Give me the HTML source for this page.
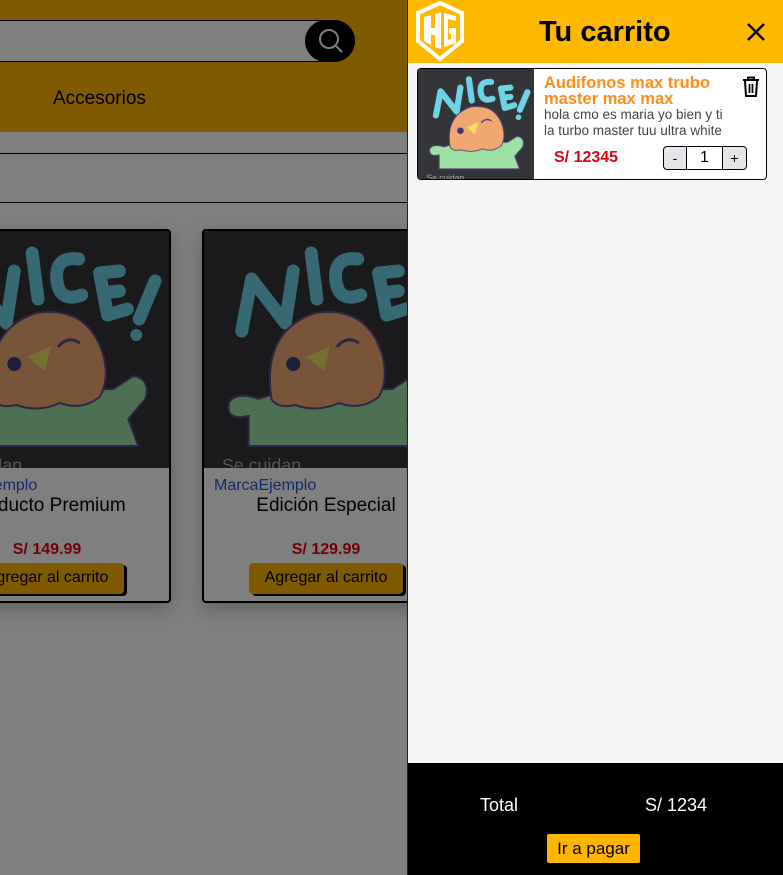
<!DOCTYPE html>
<html><head><meta charset="utf-8"><style>
*{box-sizing:border-box;margin:0;padding:0}
body{width:783px;height:875px;overflow:hidden;position:relative;background:#fff;font-family:"Liberation Sans",sans-serif}
.abs{position:absolute}
.left{left:0;top:0;width:408px;height:875px;overflow:hidden}
.hdr{left:0;top:0;width:408px;height:132px;background:#ffb400}
.search{left:-20px;top:20px;width:375px;height:42px;border:1px solid #000;border-radius:0 21px 21px 0;background:#fff}
.sbtn{left:305px;top:20px;width:50px;height:42px;border-radius:21px;background:#000}
.line{left:0;width:408px;height:1px;background:#000}
.card{top:229px;width:248px;height:374px;border:2px solid #000;border-radius:4px;background:#fff;overflow:hidden;box-shadow:0 6px 20px rgba(0,0,0,.25)}
.card .img{position:absolute;left:0;top:0;width:244px;height:237px;background:#343539}
.brand{position:absolute;left:10px;top:246px;font-size:16px;color:#2c50d8;height:17px;overflow:hidden}
.title{position:absolute;left:0;width:244px;top:264px;text-align:center;font-size:19px;color:#000}
.price{position:absolute;left:0;width:244px;top:310px;text-align:center;font-size:16px;font-weight:bold;color:#e00010}
.btn{position:absolute;left:45px;top:332px;width:154px;height:31px;background:#ffb400;border-radius:4px;box-shadow:3px 2px 0 #000;font-size:16px;text-align:center;line-height:30px;color:#000}
.ov{left:0;top:0;width:408px;height:875px;background:rgba(0,0,0,.5)}
.panel{left:407px;top:0;width:376px;height:875px;background:#f5f5f5;border-left:1px solid #222}
</style></head><body>
<svg width="0" height="0" style="position:absolute"><defs>
<g id="bird">
<rect width="246" height="237" fill="#343539"/>
<g fill="none" stroke="#6fd3e8" stroke-width="13" stroke-linecap="round" stroke-linejoin="round">
<path d="M38 100 L48 48 L82 92 L90 40"/>
<path d="M108 22 L114 68"/>
<path d="M155 28 Q130 25 133 50 Q136 72 158 64"/>
<path d="M196 40 L176 42 L184 84 L204 78 M180 62 L196 60"/>
<path d="M232 50 L216 88"/>
</g>
<circle cx="213" cy="104" r="6" fill="#6fd3e8"/>
<path d="M45 215 L45 185 Q22 190 25 172 Q32 160 55 168 L80 160 L190 158 L210 145 Q228 148 222 168 L205 188 L215 215 Z" fill="#9de0a4" stroke="#5a4a8a" stroke-width="2"/>
<path d="M68 168 Q58 100 112 82 Q165 74 180 125 Q186 150 176 166 Q158 180 136 172 Q114 182 92 174 Q74 178 68 168Z" fill="#f0a870" stroke="#5a4a8a" stroke-width="2"/>
<circle cx="90" cy="133" r="7" fill="#3a3a7a"/>
<path d="M103 126 L127 115 L121 140 Z" fill="#f0e060"/>
<path d="M134 116 Q144 104 156 112" fill="none" stroke="#5a4a8a" stroke-width="3"/>
<text x="18" y="240" font-size="18" fill="#aaa" font-family="Liberation Sans">Se cuidan</text>
</g></defs></svg>

<div class="abs left">
<div class="abs hdr"></div>
<div class="abs search"></div>
<div class="abs sbtn"><svg width="50" height="42"><circle cx="24" cy="19" r="9" fill="none" stroke="#fff" stroke-width="2"/><path d="M31 26 L37 32" stroke="#fff" stroke-width="2"/></svg></div>
<div class="abs" style="left:53px;top:88px;font-size:19px">Accesorios</div>
<div class="abs line" style="top:153px"></div>
<div class="abs line" style="top:202px"></div>

<div class="abs card" style="left:-77px">
<svg class="img" viewBox="0 0 246 237" preserveAspectRatio="none"><use href="#bird"/></svg>
<div class="brand">MarcaEjemplo</div>
<div class="title">Producto Premium</div>
<div class="price">S/ 149.99</div>
<div class="btn">Agregar al carrito</div>
</div>
<div class="abs card" style="left:202px">
<svg class="img" viewBox="0 0 246 237" preserveAspectRatio="none"><use href="#bird"/></svg>
<div class="brand">MarcaEjemplo</div>
<div class="title">Edición Especial</div>
<div class="price">S/ 129.99</div>
<div class="btn">Agregar al carrito</div>
</div>
<div class="abs ov"></div>
</div>

<div class="abs panel">
<div class="abs" style="left:0;top:0;width:375px;height:63px;background:#ffb800"></div>
<svg class="abs" style="left:6px;top:1px" width="52" height="60" viewBox="0 0 52 60">
<path d="M26 2 L48 12 L48 40 L26 58 L4 40 L4 12 Z" fill="none" stroke="#fff" stroke-width="4"/>
<path d="M10 16 L17 14 L17 27 L21 27 L21 13 L27 11 L27 48 L21 46 L21 34 L17 34 L17 44 L10 40 Z" fill="#fff"/>
<path d="M42 15 L30 12 L30 46 L42 42 L42 27 L35 27 L35 33 L37 33 L37 38 L34 39 L34 18 L42 20 Z" fill="#fff"/>
</svg>
<div class="abs" style="left:131px;top:16px;font-size:29px;font-weight:bold">Tu carrito</div>
<svg class="abs" style="left:338px;top:22px" width="20" height="20"><path d="M2 2 L18 18 M18 2 L2 18" stroke="#000" stroke-width="2.5"/></svg>

<div class="abs" style="left:9px;top:68px;width:350px;height:112px;background:#fff;border:1px solid #000;border-radius:4px;overflow:hidden">
<svg class="abs" style="left:0;top:0" width="116" height="110" viewBox="0 0 246 237" preserveAspectRatio="none"><use href="#bird"/></svg>
<div class="abs" style="left:126px;top:6px;font-size:16.5px;font-weight:bold;color:#ff8c1a;line-height:16px;width:190px">Audifonos max trubo master max max</div>
<div class="abs" style="left:126px;top:38px;font-size:13.5px;color:#444;line-height:16px;width:192px">hola cmo es maria yo bien y ti la turbo master tuu ultra white</div>
<div class="abs" style="left:136px;top:80px;font-size:16px;font-weight:bold;color:#e00010">S/ 12345</div>
<svg class="abs" style="left:323px;top:7px" width="20" height="22"><path d="M2 4 H18 M7 4 V1.5 H13 V4 M4 5 L5 20 H15 L16 5" fill="none" stroke="#000" stroke-width="2"/><path d="M8.5 8 V17 M11.5 8 V17" stroke="#000" stroke-width="1.8"/></svg>
<div class="abs" style="left:245px;top:77px;width:84px;height:24px;border:1px solid #000;border-radius:4px;background:#e4e6ea;overflow:hidden;font-size:14px">
<div class="abs" style="left:0;top:0;width:22px;height:22px;text-align:center;line-height:22px">-</div>
<div class="abs" style="left:22px;top:0;width:37px;height:22px;background:#fff;border-left:1px solid #000;border-right:1px solid #000;text-align:center;line-height:22px;font-size:16px">1</div>
<div class="abs" style="left:59px;top:0;width:23px;height:22px;text-align:center;line-height:22px">+</div>
</div>
</div>

<div class="abs" style="left:0;top:763px;width:375px;height:112px;background:#000"></div>
<div class="abs" style="left:72px;top:795px;font-size:18px;color:#fff">Total</div>
<div class="abs" style="left:237px;top:795px;font-size:18px;color:#fff">S/ 1234</div>
<div class="abs" style="left:139px;top:834px;width:93px;height:29px;background:#ffb400;border-radius:2px;font-size:17px;text-align:center;line-height:30px">Ir a pagar</div>
</div>
</body></html>
